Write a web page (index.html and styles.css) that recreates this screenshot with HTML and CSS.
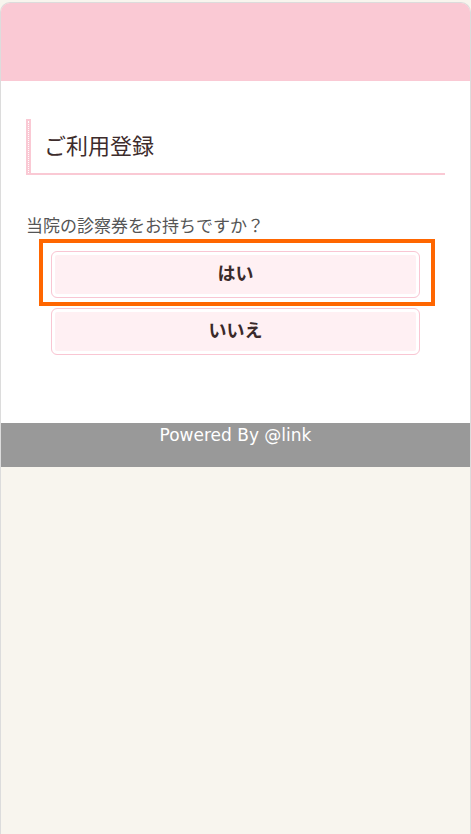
FILE: index.html
```html
<!DOCTYPE html>
<html lang="ja">
<head>
    <meta charset="UTF-8">
    <meta name="viewport" content="width=device-width, initial-scale=1.0">
    <title>ご利用登録</title>
    <link rel="stylesheet" href="styles.css">
</head>
<body>
    <div id="page">
        <div id="header"></div>
        <div id="main">
            <h1 class="title">ご利用登録</h1>
            <p class="question">当院の診察券をお持ちですか？</p>
            <div class="choices">
                <div class="choice focused">
                    <button class="btn">はい</button>
                </div>
                <div class="choice">
                    <button class="btn">いいえ</button>
                </div>
            </div>
        </div>
        <div id="footer">Powered By @link</div>
    </div>
</body>
</html>
```

FILE: styles.css
```css
html, body {
    margin: 0;
    height: 100%;
}
body {
    font-family: "Noto Sans", "Noto Sans CJK JP", sans-serif;
    background-color: #f8f5ee;
    padding-top: 2px;
    box-sizing: border-box;
}
#page {
    min-height: 100%;
    box-sizing: border-box;
    border: 1px solid #dcdcdc;
    border-bottom: none;
    border-radius: 10px 10px 0 0;
    overflow: hidden;
}
#header {
    height: 78px;
    background-color: #fac9d4;
}
#main {
    background-color: #fff;
    padding: 38px 25px 68px 25px;
}
.title {
    position: relative;
    margin: 0;
    height: 54px;
    line-height: 52px;
    padding-left: 13px;
    font-size: 22px;
    font-weight: normal;
    color: #3d2c2c;
    border-left: 5px solid #fac9d4;
    border-bottom: 2px solid #fac9d4;
}
.title::before {
    content: '';
    position: absolute;
    left: -3px;
    top: 2px;
    bottom: 0;
    border-left: 1px dotted #fff;
}
.question {
    margin: 39px 0 0 0;
    font-size: 17px;
    line-height: 24px;
    color: #555;
}
.choices {
    margin: 1px 10px 0 13px;
}
.choice {
    padding: 0 15px 0 12px;
    margin-top: 2px;
}
.choice.focused {
    margin-top: 0;
    padding: 8px 11px 4px 8px;
    border: 4px solid #ff6600;
}
.btn {
    display: block;
    width: 100%;
    height: 47px;
    padding: 0 0 5px 0;
    font-family: "Noto Sans CJK JP", sans-serif;
    font-size: 18px;
    font-weight: bold;
    color: #3b2a2a;
    background-color: #fff0f3;
    border: 1px solid #f9c6d3;
    border-radius: 6px;
    box-shadow: inset 0 0 0 3px #fff;
    cursor: pointer;
}
#footer {
    background-color: #999;
    color: #fff;
    text-align: center;
    font-family: "DejaVu Sans", sans-serif;
    font-size: 17px;
    line-height: 22px;
    height: 44px;
    box-sizing: border-box;
    padding-top: 1px;
}
```
